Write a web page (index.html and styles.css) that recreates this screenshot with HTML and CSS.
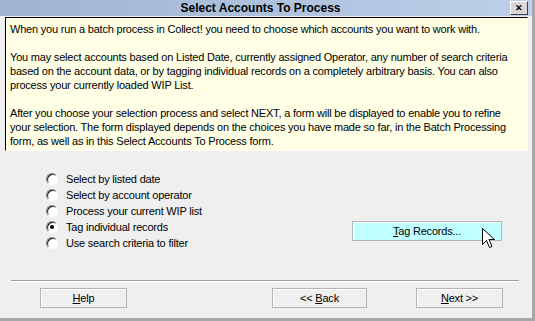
FILE: index.html
```html
<!DOCTYPE html>
<html lang="en">
<head>
    <meta charset="UTF-8">
    <title>Select Accounts To Process</title>
    <link rel="stylesheet" href="styles.css">
</head>
<body>
    <div class="window">
        <div class="titlebar">
            <span class="title">Select Accounts To Process</span>
            <span class="close">&#x2715;</span>
        </div>
        <div class="info">
            <p>When you run a batch process in Collect! you need to choose which accounts you want to work with.</p>
            <p>You may select accounts based on Listed Date, currently assigned Operator, any number of search criteria based on the account data, or by tagging individual records on a completely arbitrary basis. You can also process your currently loaded WIP List.</p>
            <p>After you choose your selection process and select NEXT, a form will be displayed to enable you to refine your selection. The form displayed depends on the choices you have made so far, in the Batch Processing form, as well as in this Select Accounts To Process form.</p>
        </div>
        <div class="options">
            <div class="radios">
                <label class="radio"><span class="dot"></span>Select by listed date</label>
                <label class="radio"><span class="dot"></span>Select by account operator</label>
                <label class="radio"><span class="dot"></span>Process your current WIP list</label>
                <label class="radio"><span class="dot on"></span>Tag individual records</label>
                <label class="radio"><span class="dot"></span>Use search criteria to filter</label>
            </div>
            <div class="tagbox">
                <button class="btn tag"><u>T</u>ag Records...</button>
                <svg class="cursor" width="13" height="21" viewBox="0 0 13 21">
                    <path d="M0.5 0.5 L0.5 16.5 L4.5 12.5 L7.5 19.5 L10 18.5 L7 11.5 L12.5 11.5 Z" fill="#fff" stroke="#000" stroke-width="1"/>
                </svg>
            </div>
        </div>
        <div class="sep"></div>
        <div class="buttons">
            <button class="btn help"><u>H</u>elp</button>
            <button class="btn back">&lt;&lt; <u>B</u>ack</button>
            <button class="btn next"><u>N</u>ext &gt;&gt;</button>
        </div>
    </div>
</body>
</html>
```

FILE: styles.css
```css
body{
    margin: 0;
    font-family: "Liberation Sans", Arial, sans-serif;
    font-size: 11px;
    letter-spacing: -0.2px;
    color: #000;
}
.window{
    width: 532px;
    height: 318px;
    background: #efefef;
    border-right: 3px solid #a8a8a8;
    border-bottom: 3px solid #a8a8a8;
}
.titlebar{
    height: 16px;
    display: flex;
    align-items: center;
    background: linear-gradient(to right, #9fb4cf, #bdd0ea);
}
.title{
    flex: 1;
    text-align: center;
    padding-left: 11px;
    font-weight: bold;
    font-size: 12px;
    letter-spacing: 0;
}
.close{
    width: 16px;
    height: 12px;
    margin-right: 4px;
    background: #d8d8d8;
    border: 1px solid;
    border-color: #fff #404040 #404040 #fff;
    font-size: 9px;
    font-weight: bold;
    line-height: 12px;
    text-align: center;
}
.info{
    height: 125px;
    margin: 1px 4px 0 5px;
    padding: 4px 4px 3px;
    background: #ffffe6;
    border: 1px solid;
    border-color: #000 #fff #fff #000;
    line-height: 14px;
}
.info p{
    margin: 0 0 14px 0;
}
.options{
    display: flex;
    height: 129px;
}
.radios{
    margin: 20px 0 0 46px;
    width: 306px;
}
.radio{
    display: flex;
    align-items: center;
    height: 16px;
}
.dot{
    width: 10px;
    height: 10px;
    margin-right: 8px;
    border-radius: 50%;
    background: #fff;
    border: 1px solid;
    border-color: #808080 #fff #fff #808080;
    box-shadow: inset 1px 1px 0 #222;
    position: relative;
}
.dot.on:after{
    content: "";
    position: absolute;
    left: 3px;
    top: 3px;
    width: 4px;
    height: 4px;
    border-radius: 50%;
    background: #000;
}
.tagbox{
    margin-top: 70px;
    position: relative;
}
.btn{
    height: 20px;
    padding: 0;
    font-family: "Liberation Sans", Arial, sans-serif;
    font-size: 11px;
    letter-spacing: -0.2px;
    color: #000;
    background: #efefef;
    border: 1px solid #b4b4b4;
    box-shadow: inset 1px 1px 0 #fff;
}
.tag{
    width: 150px;
    height: 20px;
    background: #bfffff;
}
.cursor{
    position: absolute;
    left: 130px;
    top: 7px;
}
.sep{
    margin: 0 13px 0 11px;
    border-top: 1px solid #a0a0a0;
    border-bottom: 1px solid #fff;
}
.buttons{
    display: flex;
    margin-top: 6px;
    padding-left: 40px;
}
.help{
    width: 87px;
}
.back{
    width: 95px;
    margin-left: 145px;
}
.next{
    width: 87px;
    margin-left: 49px;
}
```
